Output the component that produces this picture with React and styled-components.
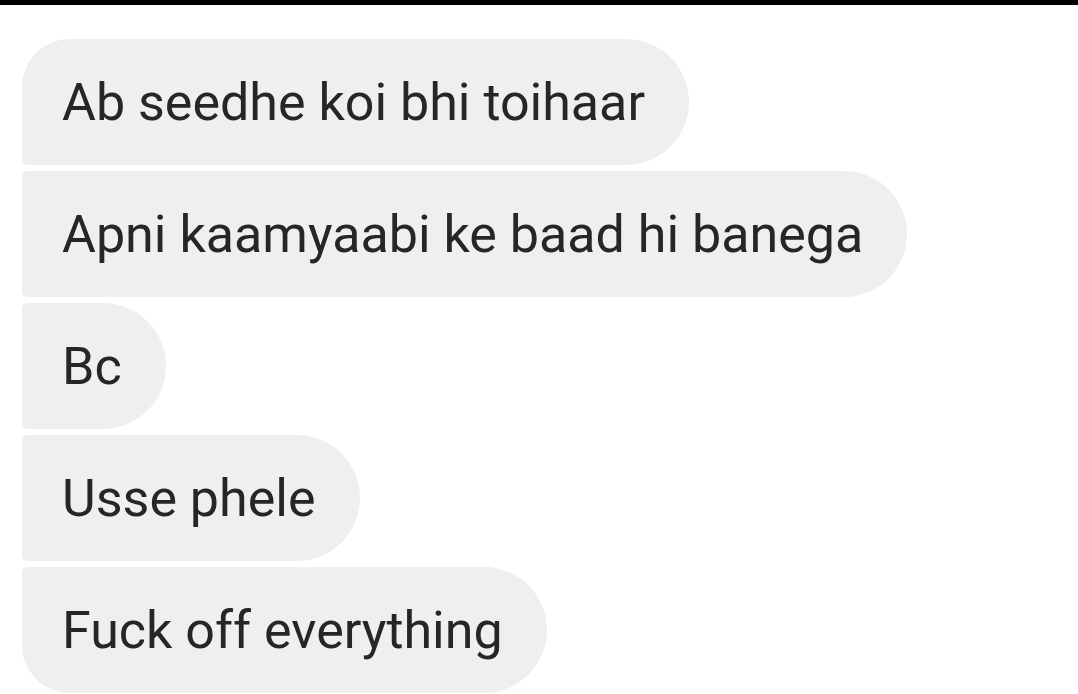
import React from "react";
import styled, { createGlobalStyle } from "styled-components";

const GlobalStyle = createGlobalStyle`
  html, body {
    margin: 0;
    padding: 0;
    background: #ffffff;
  }
  body {
    font-family: Roboto, "Noto Sans", "Liberation Sans", sans-serif;
  }
`;

const Screen = styled.div`
  width: 1078px;
  height: 694px;
  overflow: hidden;
  background: #ffffff;
  display: flex;
  flex-direction: column;
`;

const TopBar = styled.div`
  height: 5px;
  background: #000000;
  flex-shrink: 0;
`;

const Thread = styled.div`
  display: flex;
  flex-direction: column;
  align-items: flex-start;
  gap: 6px;
  padding: 34px 0 0 22px;
`;

// grouped bubbles: only the outer corner of the first/last one is big
const Bubble = styled.div`
  height: 126px;
  box-sizing: border-box;
  display: flex;
  align-items: center;
  padding: 0 44px 0 40px;
  background: #efefef;
  color: #262626;
  font-size: 52px;
  white-space: nowrap;
  border-radius: ${(p) => (p.$first ? "48px" : "5px")} 63px 63px
    ${(p) => (p.$last ? "48px" : "5px")};
`;

const messages = [
  "Ab seedhe koi bhi toihaar",
  "Apni kaamyaabi ke baad hi banega",
  "Bc",
  "Usse phele",
  "Fuck off everything",
];

const App = () => {
  return (
    <Screen>
      <GlobalStyle />
      <TopBar />
      <Thread>
        {messages.map((text, i) => (
          <Bubble
            key={i}
            $first={i === 0}
            $last={i === messages.length - 1}
          >
            {text}
          </Bubble>
        ))}
      </Thread>
    </Screen>
  );
};

export default App;
